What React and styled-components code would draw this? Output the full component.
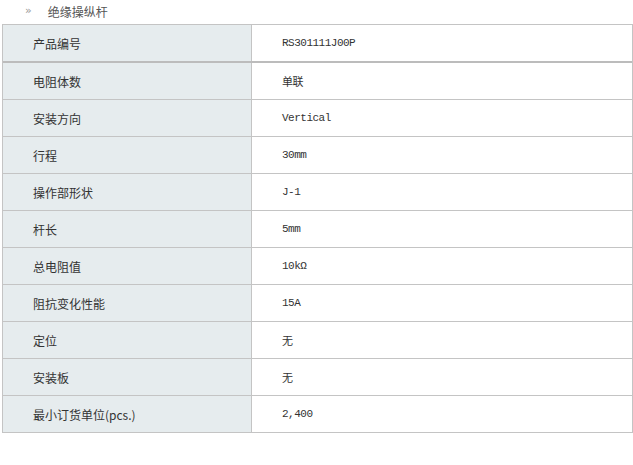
import styled, { createGlobalStyle } from 'styled-components';

const GlobalStyle = createGlobalStyle`
  body {
    margin: 0;
    background: #fff;
    font-family: "Noto Sans CJK SC", "Liberation Sans", sans-serif;
    color: #333;
  }
`;

const specs = [
  ['产品编号', 'RS301111J00P'],
  ['电阻体数', '单联'],
  ['安装方向', 'Vertical'],
  ['行程', '30mm'],
  ['操作部形状', 'J-1'],
  ['杆长', '5mm'],
  ['总电阻值', '10kΩ'],
  ['阻抗变化性能', '15A'],
  ['定位', '无'],
  ['安装板', '无'],
  ['最小订货单位(pcs.)', '2,400'],
];

const Page = () => (
  <>
    <GlobalStyle />
    <Wrap>
      <Title>
        <Arrow>»</Arrow>
        <span>绝缘操纵杆</span>
      </Title>
      <Table>
        {specs.map(([label, value], i) => (
          <Row key={label} $first={i === 0}>
            <Label>{label}</Label>
            <Value>{value}</Value>
          </Row>
        ))}
      </Table>
    </Wrap>
  </>
);

export default Page;

const Wrap = styled.div`
  width: 633px;
  padding: 0 2px;
  box-sizing: border-box;
`;

const Title = styled.div`
  display: flex;
  align-items: center;
  height: 23px;
  padding-left: 23px;
  font-size: 12px;
  color: #555;
  gap: 16px;
`;

const Arrow = styled.span`
  font-family: "DejaVu Sans", sans-serif;
  font-size: 11px;
  color: #999;
  margin-top: -3px;
`;

const Table = styled.div`
  width: 629px;
  border: 1px solid #c4c4c4;
  border-bottom: none;
  margin-top: 1px;
`;

const Row = styled.div`
  display: grid;
  grid-template-columns: 249px 1fr;
  height: 36px;
  border-bottom: ${(p) => (p.$first ? '2px solid #bcbcbc' : '1px solid #c4c4c4')};
`;

const Label = styled.div`
  display: flex;
  align-items: center;
  padding-left: 30px;
  background: #e6ecee;
  border-right: 1px solid #c4c4c4;
  font-size: 12px;
  color: #333;
`;

const Value = styled.div`
  display: flex;
  align-items: center;
  padding-left: 30px;
  font-family: "Liberation Mono", "Noto Sans CJK SC", monospace;
  font-size: 11px;
  letter-spacing: -0.5px;
  color: #333;
`;
